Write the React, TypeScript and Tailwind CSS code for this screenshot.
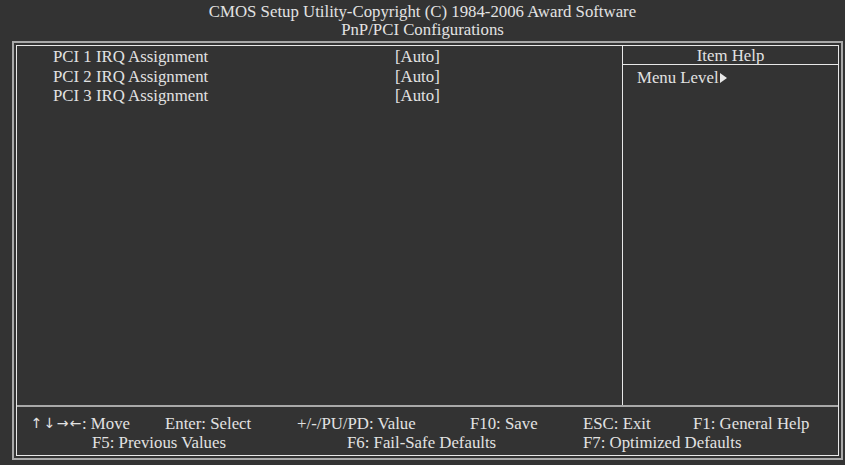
const items = [
  { label: 'PCI 1 IRQ Assignment', value: '[Auto]' },
  { label: 'PCI 2 IRQ Assignment', value: '[Auto]' },
  { label: 'PCI 3 IRQ Assignment', value: '[Auto]' },
];

const arrows = ['↑', '↓', '→', '←'];

export default function App() {
  return (
    <div className="w-[845px] h-[465px] overflow-hidden bg-[#333333] text-[#e2e2e2] font-['Liberation_Serif',serif] text-[16.8px] leading-[18px]">
      {/* title */}
      <div className="h-[41px] pt-[3px] flex flex-col items-center">
        <div>CMOS Setup Utility-Copyright (C) 1984-2006 Award Software</div>
        <div>PnP/PCI Configurations</div>
      </div>

      {/* outer frame */}
      <div className="ml-[12px] w-[831px] h-[419px] border-2 border-[#a9a9a9] p-[2px]">
        <div className="h-full border border-[#e8e8e8] flex flex-col">
          <div className="flex flex-1">
            <div className="w-[605px] pt-[1px] pl-[36px] leading-[19.5px]">
              {items.map((it) => (
                <div key={it.label} className="flex">
                  <span className="w-[342px]">{it.label}</span>
                  <span>{it.value}</span>
                </div>
              ))}
            </div>
            <div className="flex-1 border-l border-[#e8e8e8]">
              <div className="h-[19px] border-b border-[#e8e8e8] text-center pt-[1px]">Item Help</div>
              <div className="pl-[14px] pt-[4px] flex items-center">
                Menu Level
                <svg width="7" height="10" viewBox="0 0 7 10" className="ml-[1px]">
                  <path d="M0 0 L7 5 L0 10 Z" fill="#e8e8e8" />
                </svg>
              </div>
            </div>
          </div>

          {/* footer */}
          <div className="h-[50px] border-t-2 border-[#a9a9a9] pt-[7px] pl-[13px] leading-[19px]">
            <div className="flex">
              <span className="w-[135px] flex">
                {arrows.map((a) => (
                  <span key={a} className="inline-block w-[13px] text-center font-['DejaVu_Sans',sans-serif] text-[14px]">
                    {a}
                  </span>
                ))}
                <span>: Move</span>
              </span>
              <span className="w-[132px]">Enter: Select</span>
              <span className="w-[173px]">+/-/PU/PD: Value</span>
              <span className="w-[113px]">F10: Save</span>
              <span className="w-[110px]">ESC: Exit</span>
              <span>F1: General Help</span>
            </div>
            <div className="flex pl-[62px]">
              <span className="w-[255px]">F5: Previous Values</span>
              <span className="w-[236px]">F6: Fail-Safe Defaults</span>
              <span>F7: Optimized Defaults</span>
            </div>
          </div>
        </div>
      </div>
    </div>
  );
}
